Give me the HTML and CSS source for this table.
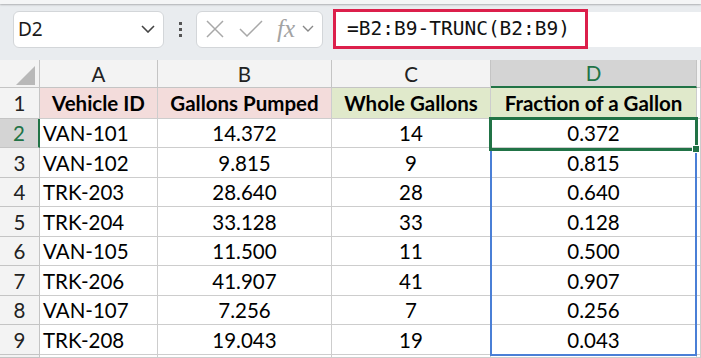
FILE: index.html
```html
<!DOCTYPE html>
<html lang="en">
<head>
<meta charset="utf-8">
<title>Sheet</title>
<link rel="stylesheet" href="styles.css">
</head>
<body>
<div class="topstrip"></div>
<div class="toolbar">
  <div class="namebox">
    <span class="nb-text">D2</span>
    <svg class="chev" width="14" height="8" viewBox="0 0 14 8"><path d="M1 1 L7 7 L13 1" fill="none" stroke="#444" stroke-width="1.6"/></svg>
  </div>
  <div class="dots"><i></i><i></i><i></i></div>
  <div class="fbtns">
    <svg width="18" height="18" viewBox="0 0 18 18"><path d="M1 1 L17 17 M17 1 L1 17" stroke="#a8a8a8" stroke-width="1.5" fill="none"/></svg>
    <svg width="24" height="18" viewBox="0 0 24 18"><path d="M1 9 L8 16 L23 1" stroke="#a8a8a8" stroke-width="1.5" fill="none"/></svg>
    <span class="fx">fx</span>
    <svg class="fchev" width="12" height="8" viewBox="0 0 12 8"><path d="M1 1 L6 6 L11 1" fill="none" stroke="#888" stroke-width="1.4"/></svg>
  </div>
  <div class="fbar">
    <div class="hl">=B2:B9-TRUNC(B2:B9)</div>
  </div>
</div>
<div class="sheet">
  <div class="ch corner"><span class="tri"></span></div>
  <div class="ch">A</div>
  <div class="ch">B</div>
  <div class="ch">C</div>
  <div class="ch chsel">D</div>
  <div class="ch"></div>

  <div class="rh">1</div>
  <div class="c hd pink">Vehicle ID</div>
  <div class="c hd pink">Gallons Pumped</div>
  <div class="c hd green">Whole Gallons</div>
  <div class="c hd green">Fraction of a Gallon</div>
  <div class="c"></div>

  <div class="rh rhsel">2</div>
  <div class="c l">VAN-101</div><div class="c">14.372</div><div class="c">14</div><div class="c">0.372</div><div class="c"></div>
  <div class="rh">3</div>
  <div class="c l">VAN-102</div><div class="c">9.815</div><div class="c">9</div><div class="c">0.815</div><div class="c"></div>
  <div class="rh">4</div>
  <div class="c l">TRK-203</div><div class="c">28.640</div><div class="c">28</div><div class="c">0.640</div><div class="c"></div>
  <div class="rh">5</div>
  <div class="c l">TRK-204</div><div class="c">33.128</div><div class="c">33</div><div class="c">0.128</div><div class="c"></div>
  <div class="rh">6</div>
  <div class="c l">VAN-105</div><div class="c">11.500</div><div class="c">11</div><div class="c">0.500</div><div class="c"></div>
  <div class="rh">7</div>
  <div class="c l">TRK-206</div><div class="c">41.907</div><div class="c">41</div><div class="c">0.907</div><div class="c"></div>
  <div class="rh">8</div>
  <div class="c l">VAN-107</div><div class="c">7.256</div><div class="c">7</div><div class="c">0.256</div><div class="c"></div>
  <div class="rh">9</div>
  <div class="c l">TRK-208</div><div class="c">19.043</div><div class="c">19</div><div class="c">0.043</div><div class="c"></div>
  <div class="rh"></div>
  <div class="c"></div><div class="c"></div><div class="c"></div><div class="c"></div><div class="c"></div>

  <div class="range"></div>
  <div class="active"></div>
  <div class="handle"></div>
</div>
</body>
</html>
```
FILE: styles.css
```css
* { box-sizing: border-box; }
html, body { margin: 0; padding: 0; }
body {
  width: 701px;
  height: 358px;
  overflow: hidden;
  background: #fff;
  font-family: Lato, "Open Sans", sans-serif;
}
.topstrip {
  height: 4px;
  background: #f4f5f6;
  box-shadow: 0 1px 2px rgba(0,0,0,0.25);
  position: relative;
}
.toolbar {
  height: 56px;
  background: #e9ecef;
  display: flex;
  align-items: center;
  padding: 0 0 6px 13px;
}
.namebox {
  width: 151px;
  height: 37px;
  background: #fff;
  border: 1px solid #d3d6d9;
  border-radius: 6px;
  display: flex;
  align-items: center;
  justify-content: space-between;
  padding: 0 8px 0 4px;
}
.nb-text {
  font-family: "Noto Sans", sans-serif;
  font-size: 19px;
  color: #1a1a1a;
}
.dots {
  width: 32px;
  display: flex;
  flex-direction: column;
  align-items: center;
  gap: 3px;
}
.dots i {
  display: block;
  width: 3px;
  height: 3px;
  background: #555;
}
.fbtns {
  width: 127px;
  height: 37px;
  background: #fff;
  border: 1px solid #d3d6d9;
  border-radius: 6px;
  display: flex;
  align-items: center;
  gap: 15px;
  padding-left: 9px;
}
.fx {
  font-family: "Liberation Serif", serif;
  font-style: italic;
  font-size: 25px;
  line-height: 1;
  color: #a3a3a3;
  margin-left: -1px;
  margin-top: -2px;
}
.fchev { margin-left: -8px; }
.fbar {
  flex: 1;
  height: 35px;
  margin-left: 10px;
  background: #fff;
  position: relative;
}
.hl {
  position: absolute;
  left: 0;
  top: -3px;
  width: 255px;
  height: 40px;
  border: 3px solid #dc1f4b;
  font-family: "DejaVu Sans Mono", monospace;
  font-size: 19.5px;
  line-height: 34px;
  padding-left: 11px;
  color: #111;
}

.sheet {
  position: relative;
  display: grid;
  grid-template-columns: 40px 118px 174px 159px 206px 1fr;
  grid-template-rows: 28px 31px 29px 30px 29px 30px 29px 30px 29px 30px 3px;
  font-size: 20.5px;
  color: #000;
}
.ch, .rh {
  background: #f3f3f3;
  border-right: 1px solid #c4c4c4;
  border-bottom: 1px solid #c4c4c4;
  display: flex;
  align-items: center;
  justify-content: center;
  color: #222;
  font-size: 20.5px;
}
.corner { position: relative; }
.tri {
  position: absolute;
  left: 16px;
  top: 6px;
  width: 19px;
  height: 19px;
  background: #b8b8b8;
  clip-path: polygon(100% 0, 100% 100%, 0 100%);
}
.chsel {
  background: #d4d4d4;
  color: #217346;
  border-bottom: 2px solid #217346;
}
.rhsel {
  background: #d4d4d4;
  color: #217346;
  border-right: 2px solid #217346;
}
.c {
  border-right: 1px solid #cdcdcd;
  border-bottom: 1px solid #cdcdcd;
  display: flex;
  align-items: center;
  justify-content: center;
  white-space: nowrap;
}
.c.l { justify-content: flex-start; padding-left: 3px; }
.hd { font-weight: 700; }
.pink { background: #f3dcdb; }
.green { background: #e0e9cb; }

.range {
  position: absolute;
  left: 490px;
  top: 58px;
  width: 207px;
  height: 238px;
  border: 2px solid #4a7fd6;
}
.active {
  position: absolute;
  left: 489px;
  top: 57px;
  width: 209px;
  height: 34px;
  border: 3px solid #217346;
}
.handle {
  position: absolute;
  left: 692px;
  top: 85px;
  width: 8px;
  height: 8px;
  background: #217346;
  border: 1px solid #fff;
}
```
